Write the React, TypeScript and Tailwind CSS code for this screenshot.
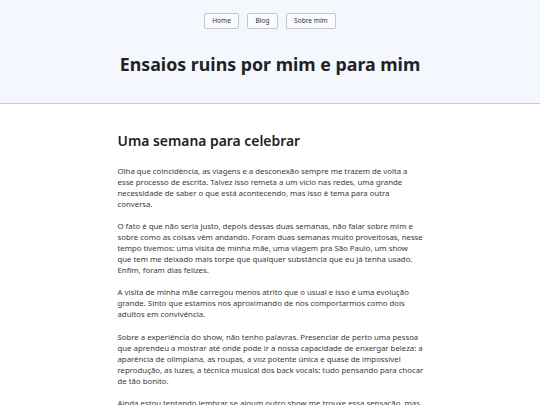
const paragraphs = [
    'Olha que coincidência, as viagens e a desconexão sempre me trazem de volta a esse processo de escrita. Talvez isso remeta a um vício nas redes, uma grande necessidade de saber o que está acontecendo, mas isso é tema para outra conversa.',
    'O fato é que não seria justo, depois dessas duas semanas, não falar sobre mim e sobre como as coisas vêm andando. Foram duas semanas muito proveitosas, nesse tempo tivemos: uma visita de minha mãe, uma viagem pra São Paulo, um show que tem me deixado mais torpe que qualquer substância que eu já tenha usado. Enfim, foram dias felizes.',
    'A visita de minha mãe carregou menos atrito que o usual e isso é uma evolução grande. Sinto que estamos nos aproximando de nos comportarmos como dois adultos em convivência.',
    'Sobre a experiência do show, não tenho palavras. Presenciar de perto uma pessoa que aprendeu a mostrar até onde pode ir a nossa capacidade de enxergar beleza: a aparência de olimpiana, as roupas, a voz potente única e quase de impossível reprodução, as luzes, a técnica musical dos back vocals: tudo pensando para chocar de tão bonito.',
    'Ainda estou tentando lembrar se algum outro show me trouxe essa sensação, mas acho que não. Foi a primeira vez que chorei num show.',
]

const links = ['Home', 'Blog', 'Sobre mim']

export default function App() {
    return (
        <div className="min-h-screen bg-white font-['Noto_Sans',sans-serif] text-[#3a3a3a]">
            <header className="bg-[#f5f7ff] border-b border-[#c9ccd3] pt-[13px] pb-[26px]">
                <nav className="flex justify-center gap-[8.5px]">
                    {links.map((link) => (
                        <a key={link} href="#" className="h-[16px] px-[7px] flex items-center bg-[#fafbff] border border-[#c4c7ce] rounded-[2px] text-[6.6px] text-[#333]">
                            {link}
                        </a>
                    ))}
                </nav>
                <h1 className="mt-[22px] text-center text-[17.8px] leading-[26px] font-bold text-[#222]">
                    Ensaios ruins por mim e para mim
                </h1>
            </header>
            <main className="w-[307px] mx-auto pt-[28px] pl-px">
                <h2 className="text-[13.9px] leading-[18px] font-semibold text-[#222]">Uma semana para celebrar</h2>
                <div className="mt-[16px] flex flex-col gap-[11.2px]">
                    {paragraphs.map((p, i) => (
                        <p key={i} className="text-[7.8px] leading-[11px]">{p}</p>
                    ))}
                </div>
            </main>
        </div>
    )
}
